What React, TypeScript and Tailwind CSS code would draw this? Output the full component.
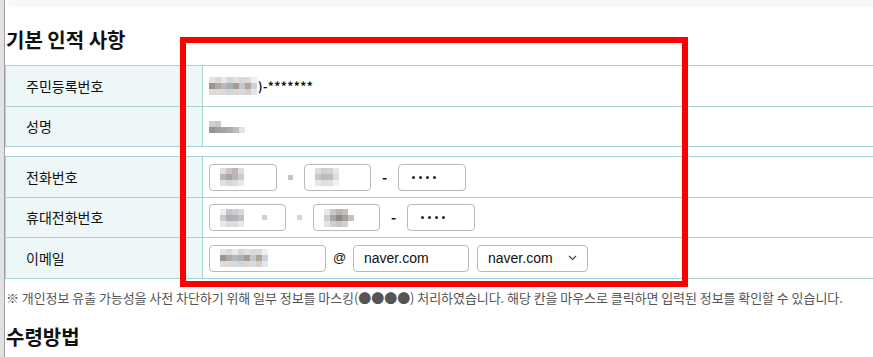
import React from "react";

const font = { fontFamily: '"Malgun Gothic", "Noto Sans CJK KR", "Liberation Sans", sans-serif' };

function Mosaic({ cells, cols, size = 6 }: { cells: string[]; cols: number; size?: number }) {
  return (
    <div
      className="grid shrink-0"
      style={{ gridTemplateColumns: `repeat(${cols}, ${size}px)`, gridAutoRows: `${size}px` }}
    >
      {cells.map((c, i) => (
        <div key={i} style={{ background: c }} />
      ))}
    </div>
  );
}

function Box({ w, children }: { w: string; children?: React.ReactNode }) {
  return (
    <div
      className={`${w} h-[27px] shrink-0 rounded-[4px] border border-[#b9b9b9] bg-white flex items-center pl-[10px] text-[14px] text-[#111]`}
    >
      {children}
    </div>
  );
}

const Dots = () => (
  <div className="flex gap-[4px] pl-[3px]">
    <div className="w-[3px] h-[3px] rounded-full bg-[#222]" />
    <div className="w-[3px] h-[3px] rounded-full bg-[#222]" />
    <div className="w-[3px] h-[3px] rounded-full bg-[#222]" />
    <div className="w-[3px] h-[3px] rounded-full bg-[#222]" />
  </div>
);

const topRow = ["#e6e4e2", "#dcd8d6", "#e8e8ea", "#d6d6da", "#e0e0e2", "#d8d8dc", "#dcdce0", "#f0f0f2"];
const midRow = ["#9c928e", "#aeaaaa", "#b6b6be", "#a8b2b6", "#a69c96", "#c6c8ce", "#aea698", "#ccd0d8"];
const lowRow = ["#e2dad6", "#dedad6", "#d8d8de", "#d0d6d8", "#dcd6d0", "#d8dae0", "#d4d0cc", "#e2e4e8"];

export default function App() {
  return (
    <div className="w-[873px] h-[357px] overflow-hidden bg-white relative flex" style={font}>
      {/* left window bleed */}
      <div className="w-[5px] shrink-0 bg-[#e2e2e2] border-r border-[#9aa0a6]" />

      <div className="flex-1 flex flex-col">
        <div className="h-[7px] ml-[2px] bg-[#f7f8fc] rounded-bl-[6px]" />

        <h2 className="mt-[19px] pl-[1px] text-[20px] leading-[28px] font-bold text-[#111]">기본 인적 사항</h2>

        {/* table 1 */}
        <div className="mt-[11px] border-t border-l border-[#a9d0d3]">
          <div className="flex h-[41px] border-b border-[#a9d0d3]">
            <div className="w-[197px] shrink-0 bg-[#eef7f7] border-r border-[#a9d0d3] flex items-center pl-[20px] text-[14px] text-[#111]">
              주민등록번호
            </div>
            <div className="flex items-center pl-[6px] text-[12px] text-[#111]">
              <Mosaic cols={8} cells={[...topRow, ...midRow, ...lowRow]} />
              <span className="ml-[1px] tracking-[0.4px] font-semibold">)-*******</span>
            </div>
          </div>
          <div className="flex h-[40px] border-b border-[#a9d0d3]">
            <div className="w-[197px] shrink-0 bg-[#eef7f7] border-r border-[#a9d0d3] flex items-center pl-[20px] text-[14px] text-[#111]">
              성명
            </div>
            <div className="flex items-center pl-[6px]">
              <Mosaic
                cols={6}
                cells={["#d6ccc8", "#c4c8d0", "#fff", "#fff", "#fff", "#fff", "#9c9290", "#98a0aa", "#a8a4a4", "#b0acac", "#c0bcbc", "#dfe4ec"]}
              />
            </div>
          </div>
        </div>

        {/* table 2 */}
        <div className="mt-[9px] border-t border-l border-[#a9d0d3]">
          <div className="flex h-[41px] border-b border-[#a9d0d3]">
            <div className="w-[197px] shrink-0 bg-[#eef7f7] border-r border-[#a9d0d3] flex items-center pl-[20px] text-[14px] text-[#111]">
              전화번호
            </div>
            <div className="flex items-center pl-[6px]">
              <Box w="w-[68px]">
                <Mosaic cols={5} cells={["#e4dcdc", "#c8c4c8", "#c0b4ae", "#d8dce6", "#fff", "#bcb4b2", "#a8a6aa", "#bdb4ac", "#c8ccd8", "#fff", "#e2e0e0", "#d8d8dc", "#e0dcd8", "#e8e8ec", "#fff"]} />
              </Box>
              <div className="w-[27px] flex justify-center">
                <div className="w-[5px] h-[5px] bg-[#c4c4c6]" />
              </div>
              <Box w="w-[67px]">
                <Mosaic cols={4} cells={["#e0dcdc", "#ccced4", "#d8d2cc", "#e2e6f0", "#c8c8cc", "#b8bcc2", "#c4bcb4", "#dcdce4", "#e8e6e6", "#e0e0e2", "#e2dedc", "#f0f0f2"]} />
              </Box>
              <div className="w-[27px] text-center text-[14px] text-[#111] font-semibold">-</div>
              <Box w="w-[68px]">
                <Dots />
              </Box>
            </div>
          </div>
          <div className="flex h-[40px] border-b border-[#a9d0d3]">
            <div className="w-[197px] shrink-0 bg-[#eef7f7] border-r border-[#a9d0d3] flex items-center pl-[20px] text-[14px] text-[#111]">
              휴대전화번호
            </div>
            <div className="flex items-center pl-[6px]">
              <Box w="w-[77px]">
                <Mosaic cols={5} cells={["#f0ecec", "#c0c8cc", "#d0ccd0", "#d8d8dc", "#fff", "#d4c8c4", "#a8b0b4", "#b4b0b4", "#c0c0c4", "#fff", "#ece8e8", "#dcdce0", "#e0dcdc", "#e8e8ea", "#fff"]} />
                <div className="ml-[12px] w-[5px] h-[5px] bg-[#d0d0d0]" />
              </Box>
              <div className="w-[27px] flex justify-center">
                <div className="w-[5px] h-[5px] bg-[#d8d4cc]" />
              </div>
              <Box w="w-[67px]">
                <Mosaic cols={5} cells={["#e8e6e6", "#c8c8cc", "#b8b4b4", "#c8bcb4", "#fff", "#cfcfd2", "#a9a6a8", "#8e8a8c", "#a4a0a0", "#c8c0b8", "#e6e2de", "#d0ccd0", "#c8c4c8", "#d6d0cc", "#fff"]} />
              </Box>
              <div className="w-[27px] text-center text-[14px] text-[#111] font-semibold">-</div>
              <Box w="w-[68px]">
                <Dots />
              </Box>
            </div>
          </div>
          <div className="flex h-[41px] border-b border-[#a9d0d3]">
            <div className="w-[197px] shrink-0 bg-[#eef7f7] border-r border-[#a9d0d3] flex items-center pl-[20px] text-[14px] text-[#111]">
              이메일
            </div>
            <div className="flex items-center pl-[6px]">
              <Box w="w-[117px]">
                <Mosaic cols={8} cells={[...topRow, ...midRow, ...lowRow]} />
              </Box>
              <div className="w-[27px] text-center text-[13px] text-[#111]" style={{ fontFamily: '"Liberation Sans", sans-serif' }}>
                @
              </div>
              <Box w="w-[116px]">
                <span style={{ fontFamily: '"Liberation Sans", sans-serif' }}>naver.com</span>
              </Box>
              <div className="ml-[8px] w-[111px] h-[27px] rounded-[4px] border border-[#b9b9b9] bg-white flex items-center justify-between pl-[10px] pr-[10px] text-[14px] text-[#111]">
                <span style={{ fontFamily: '"Liberation Sans", sans-serif' }}>naver.com</span>
                <svg width="9" height="6" viewBox="0 0 9 6" fill="none" stroke="#444" strokeWidth="1.2">
                  <path d="M1 1l3.5 3.5L8 1" />
                </svg>
              </div>
            </div>
          </div>
        </div>

        <p className="mt-[10px] pl-[1px] text-[13px] leading-[18px] tracking-[-0.06px] text-[#555] whitespace-nowrap">
          ※ 개인정보 유출 가능성을 사전 차단하기 위해 일부 정보를 마스킹(●●●●) 처리하였습니다. 해당 칸을 마우스로 클릭하면 입력된 정보를 확인할 수 있습니다.
        </p>

        <h2 className="mt-[16px] pl-[1px] text-[20px] leading-[28px] font-bold text-[#111]">수령방법</h2>
      </div>

      {/* red highlight overlay */}
      <div className="absolute left-[180px] top-[37px] w-[508px] h-[250px] border-[6px] border-[#ff0000] pointer-events-none" />
    </div>
  );
}
